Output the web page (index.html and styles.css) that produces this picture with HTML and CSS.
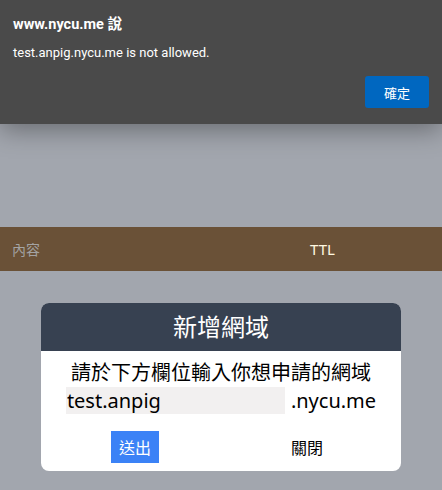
FILE: index.html
```html
<!DOCTYPE html>
<html>
<head>
  <title>新增網域</title>
  <link rel="stylesheet" href="styles.css">
</head>
<body>
  <!-- Fenetre d'alerte du navigateur -->
  <div class="alert">
    <div class="alert-title">www.nycu.me 說</div>
    <div class="alert-message">test.anpig.nycu.me is not allowed.</div>
    <button class="alert-ok">確定</button>
  </div>

  <div class="page">
    <div class="table-head">
      <span class="col-content">內容</span>
      <span class="col-ttl">TTL</span>
    </div>

    <div class="modal">
      <div class="modal-header">新增網域</div>
      <div class="modal-body">
        <p class="modal-text">請於下方欄位輸入你想申請的網域</p>
        <div class="domain-row">
          <input type="text" class="domain-input" value="test.anpig">
          <span class="domain-suffix">.nycu.me</span>
        </div>
        <div class="modal-buttons">
          <button class="btn-send">送出</button>
          <button class="btn-close">關閉</button>
        </div>
      </div>
    </div>
  </div>
</body>
</html>
```

FILE: styles.css
```css
body {
  margin: 0;
  height: 490px;
  overflow: hidden;
  background-color: #a2a6ae;
  font-family: "Noto Sans", "Noto Sans CJK TC", sans-serif;
}

button {
  font-family: inherit;
  border: none;
  cursor: pointer;
}

/* Alerte */
.alert {
  position: absolute;
  top: 0;
  left: 0;
  right: 0;
  height: 124px;
  box-sizing: border-box;
  padding: 16px 13px 0;
  background-color: #4a4a4a;
  color: #fff;
  font-family: Roboto, "Noto Sans CJK TC", sans-serif;
  box-shadow: 0 6px 24px rgba(0, 0, 0, 0.35);
  z-index: 10;
}

.alert-title {
  font-size: 14.5px;
  font-weight: bold;
  line-height: 18px;
}

.alert-message {
  margin-top: 10px;
  font-size: 13px;
  line-height: 18px;
}

.alert-ok {
  float: right;
  margin-top: 14px;
  width: 64px;
  height: 32px;
  border-radius: 3px;
  background-color: #0067c0;
  color: #fff;
  font-size: 13px;
}

/* Page */
.page {
  padding-top: 227px;
}

.table-head {
  display: flex;
  align-items: center;
  height: 44px;
  background-color: #6a5137;
}

.col-content {
  width: 298px;
  padding-left: 12px;
  color: #a3a3a3;
  font-size: 14px;
}

.col-ttl {
  color: #fff8e0;
  font-size: 15px;
}

/* Fenetre modale */
.modal {
  width: 360px;
  margin: 32px auto 0;
  border-radius: 8px;
  overflow: hidden;
  background-color: #fff;
}

.modal-header {
  height: 48px;
  line-height: 48px;
  text-align: center;
  background-color: #374151;
  color: #fff;
  font-size: 24px;
}

.modal-body {
  padding: 10px 8px 8px;
  text-align: center;
  color: #000;
}

.modal-text {
  margin: 0;
  font-size: 20px;
  line-height: 24px;
}

.domain-row {
  display: flex;
  justify-content: center;
  align-items: center;
  gap: 6px;
  margin-top: 2px;
  font-size: 20px;
}

.domain-input {
  width: 219px;
  height: 27px;
  box-sizing: border-box;
  padding: 0 1px;
  border: none;
  background-color: #f2f0f0;
  font-family: inherit;
  font-size: 20px;
  color: #000;
}

.modal-buttons {
  display: grid;
  grid-template-columns: 1fr 1fr;
  justify-items: center;
  margin-top: 17px;
}

.btn-send {
  width: 48px;
  height: 32px;
  padding: 0;
  background-color: #3b82f6;
  color: #fff;
  font-size: 16px;
}

.btn-close {
  height: 32px;
  padding: 0;
  background: none;
  color: #000;
  font-size: 16px;
}
```
